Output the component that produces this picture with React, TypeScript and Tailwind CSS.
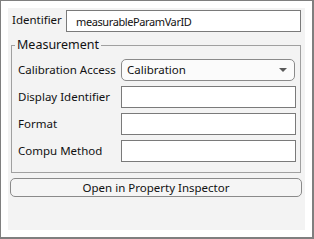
import React from "react";

function Row({ label, children }: { label: string; children: React.ReactNode }) {
  return (
    <div className="flex items-center h-[22px]">
      <span className="pl-[6px] w-[109px] text-[11.5px] leading-[16px] text-[#111]">{label}</span>
      {children}
    </div>
  );
}

function TextBox() {
  return <div className="w-[175px] h-[22px] border border-[#7a7a7a] bg-white" />;
}

export default function App() {
  return (
    <div
      className="w-[314px] h-[239px] bg-white border-l border-t border-r-2 border-b-2 border-[#7f7f7f] pt-[7px] pl-[7px]"
      style={{ fontFamily: '"Noto Sans", "Open Sans", sans-serif' }}
    >
      <div className="w-[297px] h-[222px] bg-[#f3f3f3] flex flex-col">
        <div className="flex items-center h-[22px] mt-[2px]">
          <span className="ml-[4px] w-[54px] text-[11.5px] leading-[16px] text-[#111] -mt-[3px]">Identifier</span>
          <div className="w-[235px] h-[22px] border border-[#7a7a7a] bg-white text-[11px] tracking-[-0.4px] leading-[16px] pl-[9px] pt-[2px] flex items-center text-[#111]">
            measurableParamVarID
          </div>
        </div>
        <div className="relative ml-[3px] mt-[13px] w-[290px] h-[128px] border border-[#a0a0a0] flex flex-col gap-[5px] pt-[13px]">
          <span className="absolute left-[3px] -top-[10px] px-[2px] bg-[#f3f3f3] text-[12.5px] leading-[18px] text-[#111]">
            Measurement
          </span>
          <Row label="Calibration Access">
            <div className="w-[174px] h-[22px] border border-[#8a8a8a] rounded-[5px] bg-[#fbfbfb] flex items-center justify-between pl-[5px] pr-[7px]">
              <span className="text-[11.5px] leading-[16px] text-[#111]">Calibration</span>
              <svg width="8" height="4" viewBox="0 0 8 4">
                <path d="M0 0 L8 0 L4 4 Z" fill="#5a5a5a" />
              </svg>
            </div>
          </Row>
          <Row label="Display Identifier">
            <TextBox />
          </Row>
          <Row label="Format">
            <TextBox />
          </Row>
          <Row label="Compu Method">
            <TextBox />
          </Row>
        </div>
        <button className="ml-[2px] mt-[5px] w-[292px] h-[19px] border border-[#8a8a8a] rounded-[5px] bg-[#f5f5f5] text-[11.5px] leading-[16px] text-[#111] flex items-center justify-center">
          Open in Property Inspector
        </button>
      </div>
    </div>
  );
}
